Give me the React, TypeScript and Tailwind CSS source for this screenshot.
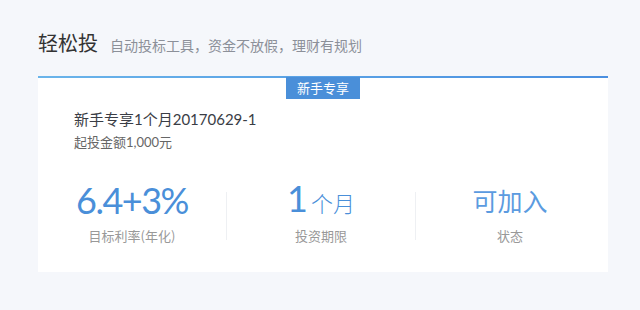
import React from "react";

const cjk = "font-['Noto_Sans_CJK_SC',sans-serif]";
const num = "font-['Lato','Noto_Sans_CJK_SC',sans-serif]";

interface StatProps {
  label: string;
  children: React.ReactNode;
}

function Stat({ label, children }: StatProps) {
  return (
    <div className="flex w-[188px] flex-col items-center">
      <div className="flex h-[40px] items-center">{children}</div>
      <p className={`${cjk} mt-[7px] text-[13px] leading-[18px] text-[#999]`}>
        {label}
      </p>
    </div>
  );
}

function Divider() {
  return <div className="mt-[12px] h-[48px] w-px bg-[#eef0f3]" />;
}

export default function App() {
  return (
    <div className="h-[310px] w-[640px] bg-[#f5f7fb] pl-[38px] pt-[29px]">
      <div className="flex items-baseline gap-[12px]">
        <h1 className={`${cjk} text-[20px] leading-[28px] text-[#333]`}>
          轻松投
        </h1>
        <p className={`${cjk} text-[14px] leading-[20px] text-[#8c9099]`}>
          自动投标工具，资金不放假，理财有规划
        </p>
      </div>

      <div className="mt-[19px] w-[570px] bg-white">
        <div className="h-[2px] bg-gradient-to-r from-[#6ab4ea] to-[#4a8fe0]" />
        <div className="relative h-[194px]">
          <span
            className={`${cjk} absolute left-1/2 top-[-1px] flex h-[22px] w-[74px] -translate-x-1/2 items-center justify-center bg-[#4a8fd9] text-[13px] text-white`}
          >
            新手专享
          </span>

          <div className="pl-[36px] pt-[31px]">
            <p className={`${num} text-[15px] leading-[20px] text-[#3a3d45]`}>
              新手专享1个月20170629-1
            </p>
            <p className={`${num} mt-[4px] text-[13px] leading-[18px] text-[#666]`}>
              起投金额1,000元
            </p>
          </div>

          <div className="mt-[29px] flex">
            <Stat label="目标利率(年化)">
              <span
                className={`${num} text-[36px] leading-[40px] tracking-[-1.5px] text-[#4a8fd9]`}
              >
                6.4+3%
              </span>
            </Stat>
            <Divider />
            <Stat label="投资期限">
              <span className="flex items-baseline">
                <span
                  className={`${num} text-[36px] leading-[40px] text-[#4a8fd9]`}
                >
                  1
                </span>
                <span
                  className={`${cjk} ml-[3px] text-[22px] font-light leading-[40px] text-[#4a8fd9]`}
                >
                  个月
                </span>
              </span>
            </Stat>
            <Divider />
            <Stat label="状态">
              <span
                className={`${cjk} text-[25px] leading-[40px] text-[#5b9be0]`}
              >
                可加入
              </span>
            </Stat>
          </div>
        </div>
      </div>
    </div>
  );
}
